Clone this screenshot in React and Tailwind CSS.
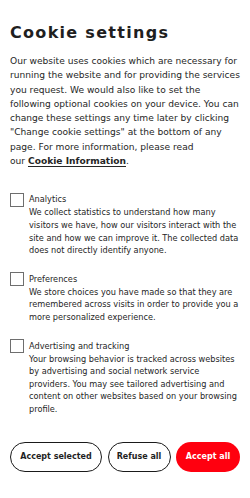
const options = [
  {
    id: 'analytics',
    label: 'Analytics',
    text: 'We collect statistics to understand how many visitors we have, how our visitors interact with the site and how we can improve it. The collected data does not directly identify anyone.',
  },
  {
    id: 'preferences',
    label: 'Preferences',
    text: 'We store choices you have made so that they are remembered across visits in order to provide you a more personalized experience.',
  },
  {
    id: 'advertising',
    label: 'Advertising and tracking',
    text: 'Your browsing behavior is tracked across websites by advertising and social network service providers. You may see tailored advertising and content on other websites based on your browsing profile.',
  },
]

function Option({ label, text }) {
  return (
    <label className="flex items-start gap-[5px] mt-[15px] first:mt-0 cursor-pointer">
      <span className="mt-[0.5px] w-[14px] h-[14px] shrink-0 border border-[#6e6e6e] bg-white" />
      <span className="flex flex-col">
        <span className="text-[8.2px] leading-[14px] text-[#262626]">{label}</span>
        <span className="text-[8.2px] leading-[12.6px] text-[#262626]">{text}</span>
      </span>
    </label>
  )
}

export default function App() {
  return (
    <div className="w-[250px] min-h-[498px] bg-white px-[10px] pt-[22px] font-['DejaVu_Sans',sans-serif]">
      <h1 className="font-bold text-[16px] leading-[22px] tracking-[1.3px] text-[#1f1f1f]">
        Cookie settings
      </h1>
      <p className="mt-[10px] text-[9.1px] leading-[14.3px] text-[#262626]">
        Our website uses cookies which are necessary for running the website and for providing the services you
        request. We would also like to set the following optional cookies on your device. You can change these
        settings any time later by clicking "Change cookie settings" at the bottom of any page. For more
        information, please read{' '}
        <span className="whitespace-nowrap">
          our{' '}
          <a href="#" className="font-bold underline underline-offset-[1.5px]">
            Cookie Information
          </a>
          .
        </span>
      </p>

      <div className="mt-[24px] flex flex-col">
        {options.map((o) => (
          <Option key={o.id} label={o.label} text={o.text} />
        ))}
      </div>

      <div className="mt-[26px] flex justify-between">
        <button className="h-[30px] w-[92px] whitespace-nowrap rounded-full border-[1.5px] border-[#1a1a1a] text-[8px] font-bold text-[#1f1f1f]">
          Accept selected
        </button>
        <button className="h-[30px] w-[63px] whitespace-nowrap rounded-full border-[1.5px] border-[#1a1a1a] text-[8px] font-bold text-[#1f1f1f]">
          Refuse all
        </button>
        <button className="h-[30px] w-[64px] whitespace-nowrap rounded-full bg-[#ff000f] text-[8px] font-bold text-white">
          Accept all
        </button>
      </div>
    </div>
  )
}
